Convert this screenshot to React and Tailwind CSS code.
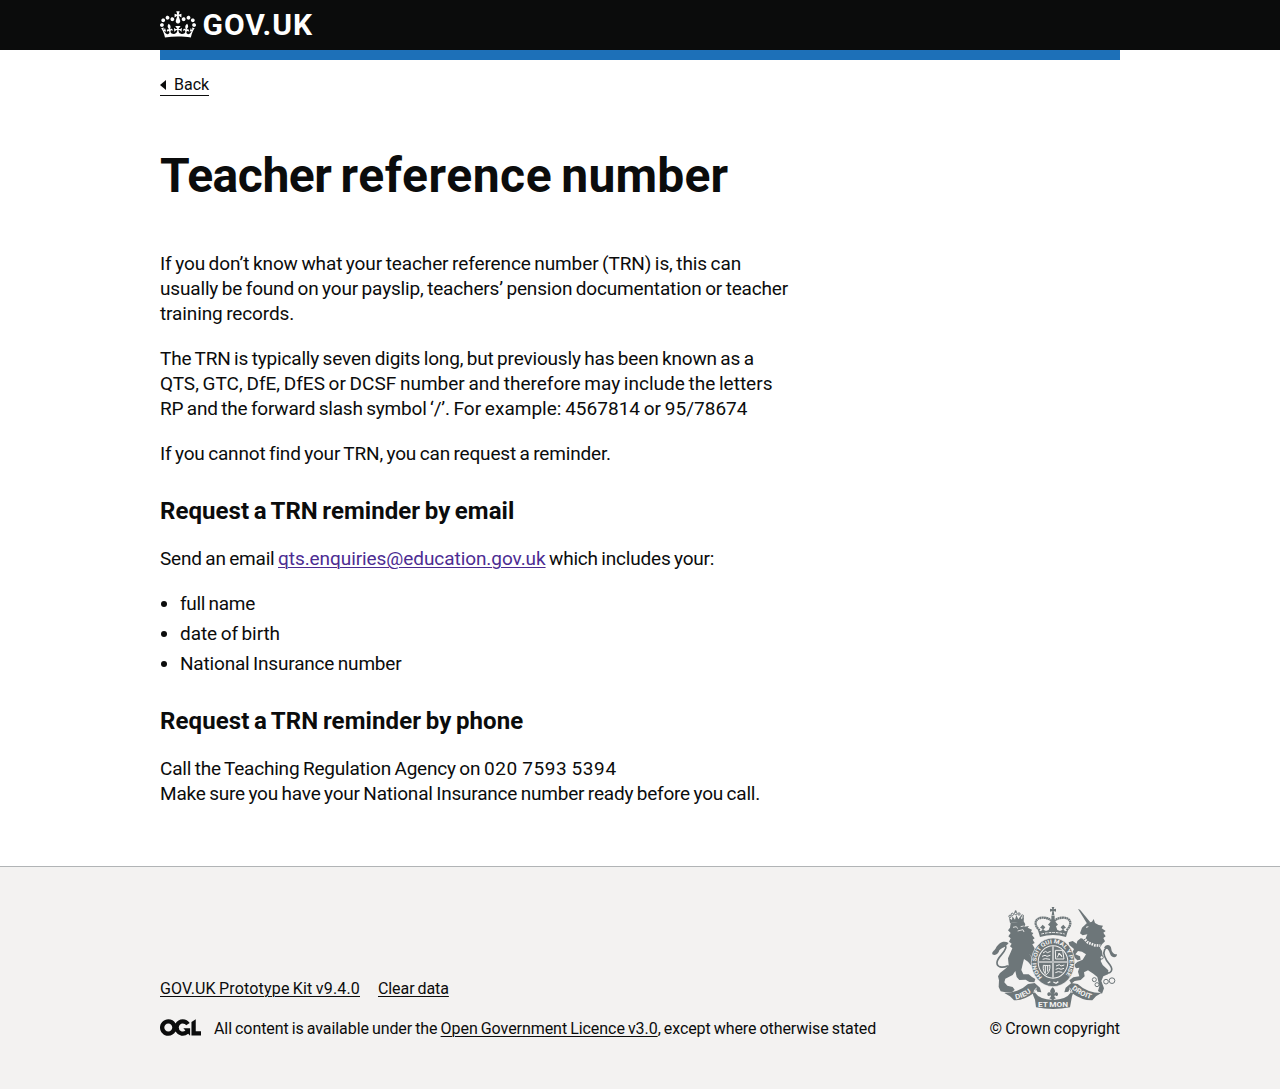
import React from "react";

function CrownIcon() {
  return (
    <svg className="mt-[0.5px] block h-[27px] w-9" viewBox="0 0 132 97" fill="currentColor" aria-hidden="true">
      <path fillRule="evenodd" d="M25 30.2c3.5 1.5 7.7-.2 9.1-3.7 1.5-3.6-.2-7.8-3.9-9.2-3.6-1.4-7.6.3-9.1 3.9-1.4 3.5.3 7.5 3.9 9zM9 39.5c3.6 1.5 7.8-.2 9.2-3.7 1.5-3.6-.2-7.8-3.9-9.1-3.6-1.5-7.6.2-9.1 3.8-1.4 3.5.3 7.5 3.8 9zM4.4 57.2c3.5 1.5 7.7-.2 9.1-3.8 1.5-3.6-.2-7.7-3.9-9.1-3.5-1.5-7.6.3-9.1 3.8-1.4 3.5.3 7.6 3.9 9.1zm38.3-21.4c3.5 1.5 7.7-.2 9.1-3.8 1.5-3.6-.2-7.7-3.9-9.1-3.6-1.5-7.6.3-9.1 3.8-1.3 3.6.4 7.7 3.9 9.1zm64.4-5.6c-3.6 1.5-7.8-.2-9.1-3.7-1.5-3.6.2-7.8 3.8-9.2 3.6-1.4 7.7.3 9.2 3.9 1.3 3.5-.4 7.5-3.9 9zm15.9 9.3c-3.6 1.5-7.7-.2-9.1-3.7-1.5-3.6.2-7.8 3.7-9.1 3.6-1.5 7.7.2 9.2 3.8 1.5 3.5-.3 7.5-3.8 9zm4.7 17.7c-3.6 1.5-7.8-.2-9.2-3.8-1.5-3.6.2-7.7 3.9-9.1 3.6-1.5 7.7.3 9.2 3.8 1.3 3.5-.4 7.6-3.9 9.1zM89.3 35.8c-3.6 1.5-7.8-.2-9.2-3.8-1.4-3.6.2-7.7 3.9-9.1 3.6-1.5 7.7.3 9.2 3.8 1.4 3.6-.3 7.7-3.9 9.1zM69.7 17.7l8.9 4.7V9.3l-8.9 2.8c-.2-.3-.5-.6-.9-.9L72.4 0H59.6l3.5 11.2c-.3.3-.6.5-.9.9l-8.8-2.8v13.1l8.8-4.7c.3.3.6.7.9.9l-5 15.4v.1c-.2.8-.4 1.6-.4 2.4 0 4.1 3.1 7.5 7 8.1h.2c.3 0 .7.1 1 .1.4 0 .7 0 1-.1h.2c4-.6 7.1-4.1 7.1-8.1 0-.8-.1-1.7-.4-2.4V34l-5.1-15.4c.4-.2.7-.6 1-.9zM66 92.8c16.9 0 32.8 1.1 47.1 3.2 4-16.9 8.9-26.7 14-33.5l-9.6-3.4c1 4.9 1.1 7.2 0 10.2-1.5-1.4-3-4.3-4.2-8.7L108.6 76c2.8-2 5-3.2 7.5-3.3-4.4 9.4-10 11.9-13.6 11.2-4.3-.8-6.3-4.6-5.6-7.9 1-4.7 5.7-5.9 8-.5 4.3-8.7-3-11.4-7.6-8.8 7.1-7.2 7.9-13.5 2.1-21.1-8 6.1-8.1 12.3-4.5 20.8-4.7-5.4-12.1-2.5-9.5 6.2 3.4-5.2 7.9-2 7.2 3.1-.6 4.3-6.4 7.8-13.5 7.2-10.3-.9-10.9-8-11.2-13.8 2.5-.5 7.1 1.8 11 7.3L80.2 60c-4.1 4.4-8 5.3-12.3 5.4 1.4-4.4 8-11.6 8-11.6H55.5s6.4 7.2 7.9 11.6c-4.2-.1-8-1-12.3-5.4l1.4 16.4c3.9-5.5 8.5-7.7 10.9-7.3-.3 5.8-.9 12.8-11.1 13.8-7.2.6-12.9-2.9-13.5-7.2-.7-5 3.8-8.3 7.1-3.1 2.7-8.7-4.6-11.6-9.4-6.2 3.7-8.5 3.6-14.7-4.6-20.8-5.8 7.6-5 13.9 2.2 21.1-4.7-2.6-11.9.1-7.7 8.8 2.3-5.5 7.1-4.2 8.1.5.7 3.3-1.3 7.1-5.7 7.9-3.5.7-9-1.8-13.5-11.2 2.5.1 4.7 1.3 7.5 3.3l-4.7-15.4c-1.2 4.4-2.7 7.2-4.3 8.7-1.1-3-.9-5.3 0-10.2l-9.5 3.4c5 6.9 9.9 16.7 14 33.5 14.8-2.1 30.8-3.2 47.7-3.2z" />
    </svg>
  );
}

function OglLogo() {
  return (
    <svg className="block h-[17px] w-[41px]" viewBox="0 0 483.2 195.7" fill="currentColor" aria-label="Open Government Licence">
      <path d="M421.5 142.8V.1l-50.7 32.3v161.1h112.4v-50.7zm-122.3-9.6A47.12 47.12 0 0 1 221 97.8c0-26 21.1-47.1 47.1-47.1 16.7 0 31.4 8.7 39.7 21.8l42.7-27.2A97.63 97.63 0 0 0 268.1 0c-36.5 0-68.3 20.1-85.1 49.7A98 98 0 0 0 97.8 0C43.9 0 0 43.9 0 97.8s43.9 97.8 97.8 97.8c36.5 0 68.3-20.1 85.1-49.7a97.76 97.76 0 0 0 149.6 25.4l19.4 22.2h3v-87.8h-80l24.3 27.5zM97.8 145c-26 0-47.1-21.1-47.1-47.1s21.1-47.1 47.1-47.1 47.1 21.1 47.1 47.1S123.8 145 97.8 145" />
    </svg>
  );
}

function CoatOfArms() {
  const ink = "#6d7679";
  const paper = "#f3f2f1";
  return (
    <svg className="block h-[102px] w-[125px]" viewBox="36 36 375 306" fill={ink} stroke="none" aria-hidden="true">
      {/* lion */}
      <path d="M90 84L87 68L96 75L97 64L105 74L109 60L115 73L122 62L124 73L132 65L131 80Z" />
      <g fill="none" stroke={ink} strokeWidth="3"><circle cx="90" cy="64" r="3.5" /><circle cx="97" cy="58" r="3.5" /><circle cx="107" cy="55" r="4" /><circle cx="117" cy="57" r="3.5" /><circle cx="127" cy="63" r="3.5" /></g>
      <path d="M104 49h6M107 46v7" stroke={ink} strokeWidth="3" />
      <path d="M92 84L131 79L136 88L133 95L147 93L143 98L156 104L153 111L160 114L156 120L164 130L158 134L164 144L157 148L164 160L168 176L166 190L155 186L147 176L158 192L164 204L154 212L144 200L132 192L128 208L124 225L130 238L146 238L156 246L166 252L163 262L148 261L137 254L118 255L110 246L106 228L98 240L76 251L73 262L82 272L98 276L104 284L96 292L76 292L62 289L56 276L57 256L54 244L60 234L78 220L86 210L84 190L92 172L97 160L90 154L95 146L87 140L92 130L85 124L92 114L84 106L90 98Z" />
      <path d="M99 97l10-2 4 6M122 95l9-2M113 108l16-4 3 7" fill="none" stroke={paper} strokeWidth="2.5" />
      <path d="M84 212C66 221 50 216 51 202C53 186 72 176 77 160C80 150 70 149 62 155" fill="none" stroke={ink} strokeWidth="5" />
      <path d="M86 144C70 134 56 144 48 158C44 168 35 168 37 178C46 184 56 176 58 166C64 158 76 158 86 144Z" />

      {/* unicorn */}
      <path d="M294 42L300 44L331 82L322 87Z" />
      <path d="M321 84L336 80L341 72L345 84L356 90L369 92L365 100L377 108L370 113L377 124L370 129L375 139L366 148L360 158L366 168L368 184L362 198L368 210L385 226L384 238L370 244L364 258L372 280L366 296L354 288L358 274L352 246L340 236L324 226L312 232L314 244L302 255L284 258L274 266L268 256L280 247L298 244L294 230L298 218L288 220L282 210L292 201L308 194L318 178L306 170L294 168L286 178L300 184L302 194L292 196L282 186L276 174L282 162L268 150L266 142L278 138L290 146L292 138L302 130L316 132L322 118L308 121L300 115L306 98Z" />
      <path d="M310 128L324 143L345 151L361 152" fill="none" stroke={paper} strokeWidth="8" strokeDasharray="5 3" />
      <path d="M318 97l7-2" stroke={paper} strokeWidth="3" />
      <path d="M377 234C395 236 400 224 390 210C378 196 366 180 374 164C378 157 386 158 388 163" fill="none" stroke={ink} strokeWidth="5" />
      <path d="M372 158C380 145 393 150 394 162C395 172 402 179 411 178C411 187 402 190 395 184C388 178 390 160 372 158Z" />
      <g fill={paper} stroke={ink} strokeWidth="3">
        <circle cx="343" cy="254" r="6" /><circle cx="351" cy="269" r="6" /><circle cx="378" cy="260" r="7" /><circle cx="396" cy="257" r="8.5" /><circle cx="365" cy="187" r="5" />
      </g>

      {/* garter and shield */}
      <ellipse cx="219" cy="202" rx="65" ry="73" stroke={paper} strokeWidth="2" />
      <path id="motto" d="M187 246A50 57 0 1 1 251 246" fill="none" />
      <text fill={paper} fontSize="17" fontWeight="700" fontFamily="Roboto, sans-serif">
        <textPath href="#motto" textLength="256" lengthAdjust="spacingAndGlyphs">HONI SOIT QUI MAL Y PENSE</textPath>
      </text>
      <ellipse cx="219" cy="201" rx="46" ry="50" fill={paper} />
      <ellipse cx="219" cy="201" rx="43" ry="47" />
      <path d="M219 154v94M176 201h86" stroke={paper} strokeWidth="5" />
      <path d="M219 154v94M176 201h86" stroke={ink} strokeWidth="1.5" />
      <g fill="none" stroke={paper} strokeWidth="3">
        <path d="M189 174l8-5 5 4 10-4M186 184l9-3 6 3 10-3M188 193l9-2 13 2" />
        <path d="M226 166l22 0 4 26-25 0zM232 187l6-13 8 12M234 176l12 6" />
        <path d="M190 211c8 0 14 2 20 0c0 15-4 24-12 28c-6-7-10-15-8-28zM196 212v22M203 212v18" />
        <path d="M228 213l10-4 5 4 10-3M227 223l9-3 7 3 9-3M226 233l9-3 12 2" />
      </g>
      <path d="M203 264l8-4M220 261l8 4 7-5" stroke={paper} strokeWidth="4" fill="none" />

      {/* royal crown */}
      <path d="M215 36h8l-2 7 7-2v9l-7-2 2 13h-8l2-13-7 2v-9l7 2z" />
      <path d="M179 106C160 90 164 68 188 68C204 68 213 74 219 84C225 74 234 68 250 68C274 68 278 90 259 106" fill="none" stroke={ink} strokeWidth="7" strokeDasharray="5.5 1" />
      <path d="M214 62h10v38h-10z" />
      <path d="M174 106l9 3 5-7-8-4 8-9 8 8-6 7 8 4 8-3 4-11-6-5 7-8 8-5 8 5 7 8-6 5 4 11 8 3 8-4-6-7 8-8 8 9-8 4 5 7 9-3-6 20q-39-12-78 0z" />
      <path d="M184 117q35-9 70 0" fill="none" stroke={paper} strokeWidth="3" strokeDasharray="8 3" />

      {/* ribbon */}
      <path d="M73 294Q116 294 144 267L164 264L180 278L184 292L172 290L168 282L162 294Q130 317 102 316L90 304Z" />
      <path d="M364 294Q322 294 293 267L274 264L257 278L253 292L265 290L269 282L275 294Q307 317 337 316L348 304Z" />
      <path d="M165 314L160 302L158 293Q158 279 170 277Q162 288 166 294Q178 313 219 315Q260 313 271 294Q275 288 268 277Q280 279 280 293L276 304L270 337Q219 347 168 337Z" />
      <path d="M162 294Q161 283 170 279M268 279Q277 283 276 294" fill="none" stroke={paper} strokeWidth="3" />
      <path id="ribbonLeft" d="M107 313Q137 308 163 284" fill="none" />
      <path id="ribbonRight" d="M275 281Q300 304 338 313" fill="none" />
      <g fill={paper} fontSize="21" fontWeight="700" fontFamily="Roboto, sans-serif">
        <text><textPath href="#ribbonLeft" textLength="52" lengthAdjust="spacingAndGlyphs">DIEU</textPath></text>
        <text><textPath href="#ribbonRight" textLength="66" lengthAdjust="spacingAndGlyphs">DROIT</textPath></text>
        <text x="174" y="336" textLength="90" lengthAdjust="spacingAndGlyphs">ET MON</text>
      </g>

      {/* fleur-de-lis */}
      <path d="M218 277c12 11 6 16 3 21c7-11 14-6 13 1c-1 5-7 6-9 1l-2 5 5 5-5 2-5 5-5-5-5-2 5-5-2-5c-2 5-8 4-9-1c-1-7 6-12 13-1c-4-5-9-10 3-21z" />
    </svg>
  );
}

const links = "underline decoration-1 underline-offset-[2px]";

function Line({ className = "", children }) {
  return <span className={`block whitespace-nowrap ${className}`}>{children}</span>;
}

export default function App() {
  return (
    <div className="min-h-[1089px] bg-[#f3f2f1] font-['Roboto',sans-serif] text-[#0b0c0c]">
      <header className="h-[50px] bg-[#0b0c0c] text-white">
        <div className="mx-auto flex w-[960px] items-start pt-[10px]">
          <CrownIcon />
          <span className="ml-[6.5px] text-[30px] font-bold leading-[30px] tracking-[0.95px]">GOV.UK</span>
        </div>
      </header>

      <div className="border-b border-[#b1b4b6] bg-white">
        <div className="mx-auto flex h-[816px] w-[960px] flex-col items-start border-t-[10px] border-[#1d70b8] pt-[15px]">
          <a className="flex h-[21px] items-center border-b border-[#0b0c0c] text-[16px] leading-5">
            <svg className="mr-[8px] h-[10px] w-[6px]" viewBox="0 0 6 10" fill="currentColor"><path d="M0 5l6-5v10z" /></svg>
            Back
          </a>

          <main className="w-[630px] pt-[55px] text-[19px] leading-[25px] [word-spacing:-1px]">
            <h1 className="mb-[50px] whitespace-nowrap text-[48px] font-bold leading-[50px] tracking-[0.2px] [word-spacing:-3px]">
              <span className="tracking-[-0.45px]">Teacher</span> <span className="tracking-[0.57px]">reference</span> number
            </h1>
            <p className="mb-5">
              <Line className="tracking-[-0.108px]">If you don’t know what your teacher reference number (TRN) is, this can</Line>
              <Line className="tracking-[-0.163px]">usually be found on your payslip, teachers’ pension documentation or teacher</Line>
              <Line className="tracking-[-0.12px]">training records.</Line>
            </p>
            <p className="mb-5">
              <Line className="tracking-[-0.18px]">The TRN is typically seven digits long, but previously has been known as a</Line>
              <Line>QTS, GTC, DfE, DfES or DCSF number and therefore may include the letters</Line>
              <Line className="tracking-[0.015px]"><span className="tracking-[-0.2px]">RP and the forward slash symbol ‘/’.</span> For example: 4567814 or 95/78674</Line>
            </p>
            <p className="tracking-[-0.173px]">If you cannot find your TRN, you can request a reminder.</p>

            <h2 className="mb-5 mt-[30px] text-2xl font-bold leading-[30px] tracking-[0.06px] [word-spacing:-1.5px]">Request a TRN reminder by email</h2>
            <p className="mb-5 whitespace-nowrap tracking-[-0.2px]">
              Send an email{" "}
              <a className="text-[#4c2c92] underline decoration-1 underline-offset-[2px] tracking-[-0.073px]">qts.enquiries@education.gov.uk</a>{" "}
              which includes your:
            </p>
            <ul className="list-disc space-y-[5px] pl-5">
              <li className="tracking-[-0.29px]">full name</li>
              <li className="tracking-[-0.085px]">date of birth</li>
              <li className="tracking-[-0.184px]">National Insurance number</li>
            </ul>

            <h2 className="mb-5 mt-[30px] text-2xl font-bold leading-[30px] tracking-[0.1px] [word-spacing:-1.5px]">Request a TRN reminder by phone</h2>
            <p>
              <Line><span className="tracking-[-0.2px]">Call the Teaching Regulation Agency on</span> <span className="tracking-[0.6px]">020 7593 5394</span></Line>
              <Line className="tracking-[-0.204px]">Make sure you have your National Insurance number ready before you call.</Line>
            </p>
          </main>
        </div>
      </div>

      <footer className="mx-auto flex w-[960px] items-end justify-between pt-10 text-[16px] leading-5 [word-spacing:-0.8px]">
        <div>
          <div className="mb-5 flex gap-[18px]">
            <a className={`${links} tracking-[0.163px]`}>GOV.UK Prototype Kit v9.4.0</a>
            <a className={`${links} tracking-[-0.09px]`}>Clear data</a>
          </div>
          <div className="flex items-start">
            <OglLogo />
            <span className="ml-[13px] whitespace-nowrap tracking-[-0.08px]">
              All content is available under the{" "}
              <a className={`${links} tracking-[-0.06px]`}>Open Government Licence v3.0</a>
              , except where otherwise stated
            </span>
          </div>
        </div>
        <div className="flex flex-col items-center gap-[10px]">
          <CoatOfArms />
          <span className="tracking-[-0.02px]">© Crown copyright</span>
        </div>
      </footer>
    </div>
  );
}
